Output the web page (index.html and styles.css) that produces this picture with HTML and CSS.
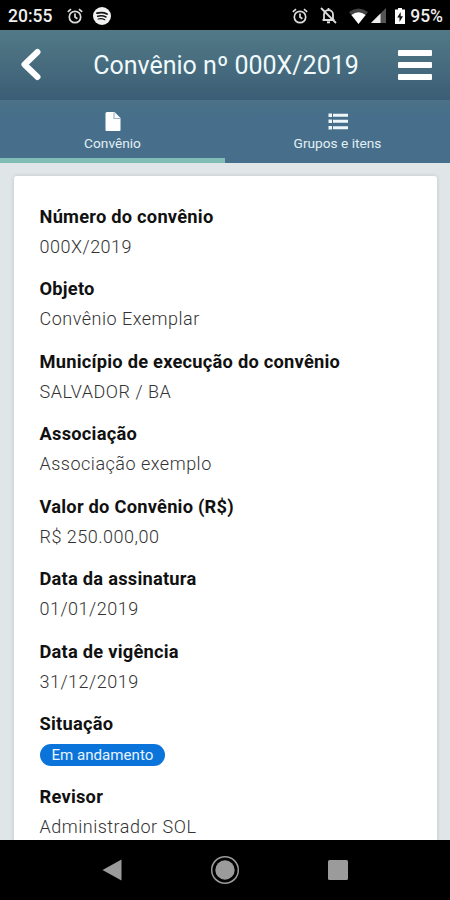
FILE: index.html
```
<!DOCTYPE html>
<html lang="pt-BR">
<head>
  <meta charset="UTF-8">
  <meta name="viewport" content="width=device-width, initial-scale=1.0">
  <title>Convênio nº 000X/2019</title>
  <link rel="stylesheet" href="styles.css">
</head>
<body>
  <div class="status-bar">
    <span class="time">20:55</span>
    <svg width="16" height="16" viewBox="0 0 16 16" fill="none" stroke="#ddd" stroke-width="1.7">
      <circle cx="8" cy="9" r="5.7"/>
      <path d="M8 5.5V9l2.4 1.8M.8 3.8 4 1.1M15.2 3.8 12 1.1"/>
    </svg>
    <svg class="icon-music" width="18" height="18" viewBox="0 0 18 18" fill="none" stroke="#111" stroke-linecap="round">
      <circle cx="9" cy="9" r="9" fill="#f2f2f2" stroke="none"/>
      <path d="M4 6.2q5.5-1.5 10 .8" stroke-width="1.8"/>
      <path d="M4.7 9.2q4.5-1.2 8.3.8" stroke-width="1.5"/>
      <path d="M5.2 12q3.6-.9 6.6.7" stroke-width="1.2"/>
    </svg>
    <div class="status-right">
      <svg width="16" height="16" viewBox="0 0 16 16" fill="none" stroke="#ddd" stroke-width="1.7">
        <circle cx="8" cy="9" r="5.7"/>
        <path d="M8 5.5V9l2.4 1.8M.8 3.8 4 1.1M15.2 3.8 12 1.1"/>
      </svg>
      <svg class="icon-bell" width="17" height="17" viewBox="0 0 17 17" fill="none" stroke="#ddd" stroke-width="1.8">
        <path d="M4 13V7.5a4.500 4.500 0 0 1 9 0V13M2.500 13h12M8.500 1v2M1 1l15 15"/>
        <path d="M7 15.3h3" stroke-width="2"/>
      </svg>
      <svg class="icon-wifi" width="19" height="16" viewBox="0 0 19 16">
        <path d="M9.5 16 0 4Q9.5-3 19 4z" fill="#444"/>
        <path d="M9.5 16 2.4 7Q9.500 1.500 16.600 7z" fill="#fff"/>
      </svg>
      <svg class="icon-signal" width="15" height="15" viewBox="0 0 15 15">
        <path d="M15 0v15H0z" fill="#555"/>
        <path d="M9.5 5.5V15H0z" fill="#eee"/>
      </svg>
      <svg class="icon-battery" width="10" height="16" viewBox="0 0 10 16">
        <path d="M0 1.500h3V0h4v1.500h3V16H0z" fill="#fff"/>
        <path d="M5.7 4 2.2 9.5h2.3V14L8 8.200H5.700z" fill="#111"/>
      </svg>
      <span class="percent">95%</span>
    </div>
  </div>

  <header>
    <a class="back" href="#" aria-label="Voltar">
      <svg width="22" height="34" viewBox="0 0 22 34" fill="none" stroke="#fff" stroke-width="6" stroke-linecap="round" stroke-linejoin="round">
        <path d="M17.500 4 4.500 16.500l13 12.500"/>
      </svg>
    </a>
    <h1>Convênio nº 000X/2019</h1>
    <a class="menu" href="#" aria-label="Menu">
      <span></span>
      <span></span>
      <span></span>
    </a>
  </header>

  <nav>
    <a class="tab active" href="#convenio">
      <svg width="22" height="22" viewBox="0 0 22 22">
        <path d="M5 1h7.500L18.500 7v12a1 1 0 0 1-1 1H4.500a1 1 0 0 1-1-1V2.500A1.500 1.500 0 0 1 5 1z" fill="#fff"/>
        <path d="M12 1.500V7.500h6" fill="none" stroke="#9fb5c3" stroke-width="1.2"/>
      </svg>
      <span>Convênio</span>
    </a>
    <a class="tab" href="#grupos">
      <svg width="22" height="22" viewBox="0 0 22 22" fill="#edf6f8">
        <path d="M1.500 2.500h3.500v3.500H1.500zM6 2.800h15v3H6zM1.500 8.500h3.500v3.500H1.500zM6 8.800h15v3H6zM1.500 15h3.500v3.500H1.500zM6 15.300h15v3H6z"/>
      </svg>
      <span>Grupos e itens</span>
    </a>
  </nav>

  <main>
    <div class="card">
      <dl>
        <dt>Número do convênio</dt>
        <dd>000X/2019</dd>
        <dt>Objeto</dt>
        <dd>Convênio Exemplar</dd>
        <dt>Município de execução do convênio</dt>
        <dd>SALVADOR / BA</dd>
        <dt>Associação</dt>
        <dd>Associação exemplo</dd>
        <dt>Valor do Convênio (R$)</dt>
        <dd>R$ 250.000,00</dd>
        <dt>Data da assinatura</dt>
        <dd>01/01/2019</dd>
        <dt>Data de vigência</dt>
        <dd>31/12/2019</dd>
        <dt>Situação</dt>
        <dd><span class="badge">Em andamento</span></dd>
        <dt>Revisor</dt>
        <dd>Administrador SOL</dd>
      </dl>
    </div>
  </main>

  <div class="nav-bar">
    <svg width="20" height="22" viewBox="0 0 20 22"><path d="M19.500.5v21L.5 11z" fill="#9b9b9b"/></svg>
    <svg width="30" height="30" viewBox="0 0 30 30">
      <circle cx="15" cy="15" r="13.3" fill="none" stroke="#9b9b9b" stroke-width="1.5"/>
      <circle cx="15" cy="15" r="9.7" fill="#9b9b9b"/>
    </svg>
    <svg width="20" height="20" viewBox="0 0 20 20"><rect width="20" height="20" rx="1.5" fill="#9b9b9b"/></svg>
  </div>
</body>
</html>
```
FILE: styles.css
```
* {
  box-sizing: border-box;
}

body {
  margin: 0;
  height: 900px;
  display: flex;
  flex-direction: column;
  overflow: hidden;
  background: #e0e5e7;
  font-family: Roboto, sans-serif;
}

a {
  color: inherit;
  text-decoration: none;
}

svg {
  display: block;
  flex: none;
}

.status-bar {
  height: 30px;
  flex: none;
  display: flex;
  align-items: center;
  padding: 1px 7px 0 8px;
  background: #000;
  color: #eee;
  font-size: 17.5px;
  font-weight: 500;
}

.time {
  width: 59px;
}

.icon-music {
  margin-left: 10px;
}

.status-right {
  margin-left: auto;
  display: flex;
  align-items: center;
}

.icon-bell {
  margin-left: 12px;
}

.icon-wifi {
  margin-left: 12px;
}

.icon-signal {
  margin-left: 3px;
}

.icon-battery {
  margin-left: 9px;
}

.percent {
  margin-left: 5px;
}

header {
  height: 70px;
  flex: none;
  display: flex;
  align-items: center;
  padding: 0 18px 0 20px;
  background: linear-gradient(#517a86, #3c5d76);
  color: #f0fafc;
}

h1 {
  flex: 1;
  margin: 0;
  text-align: center;
  font-size: 25px;
  font-weight: 400;
}

.back {
  width: 34px;
}

.menu {
  width: 34px;
  display: flex;
  flex-direction: column;
  gap: 6px;
}

.menu span {
  height: 6px;
  border-radius: 1px;
  background: #fff;
}

nav {
  height: 63px;
  flex: none;
  display: flex;
  background: linear-gradient(#4b7186, #476f8c 30%);
}

.tab {
  flex: 1;
  display: flex;
  flex-direction: column;
  align-items: center;
  padding-top: 11px;
  color: #e3f0f4;
  font-size: 13.7px;
  line-height: 20px;
  border-bottom: 5px solid transparent;
}

.tab.active {
  border-bottom-color: #82bdb5;
}

main {
  flex: 1;
  min-height: 0;
  overflow: hidden;
  padding: 13px 13px 0 14px;
}

.card {
  height: 900px;
  padding: 25.5px 25.5px;
  border-radius: 3px;
  background: #fff;
  box-shadow: 0 0 4px rgba(0, 0, 0, 0.14);
}

dl {
  margin: 0;
}

dt {
  color: #111;
  font-size: 18.3px;
  font-weight: 700;
  line-height: 30px;
  letter-spacing: 0.23px;
}

dd {
  height: 30px;
  margin: 0 0 12.5px;
  color: #333;
  font-size: 18px;
  font-weight: 300;
  line-height: 30px;
  letter-spacing: 0.5px;
}

.badge {
  display: inline-block;
  height: 22px;
  padding: 0 12px;
  border-radius: 11px;
  background: #0b74da;
  color: #e6f3ff;
  font-size: 15.1px;
  font-weight: 400;
  line-height: 22px;
  letter-spacing: 0;
}

.nav-bar {
  height: 60px;
  flex: none;
  display: flex;
  align-items: center;
  justify-content: space-between;
  padding: 0 102px;
  background: #000;
}
```
